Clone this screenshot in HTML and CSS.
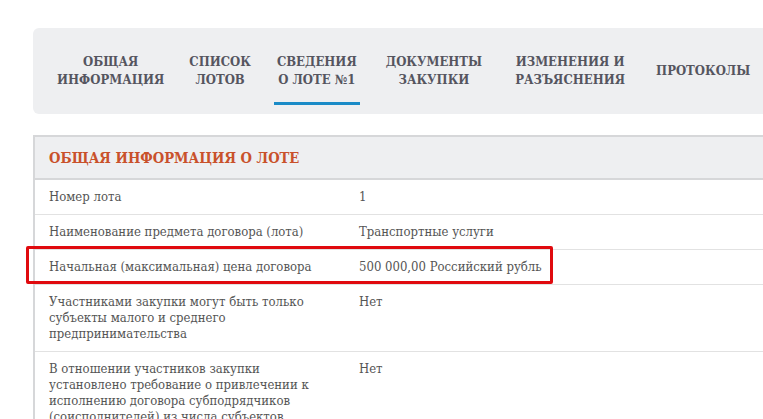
FILE: index.html
```
<!DOCTYPE html>
<html lang="ru">
<head>
<meta charset="utf-8">
<title>Сведения о лоте</title>
<link rel="stylesheet" href="styles.css">
</head>
<body>
<div class="page">
  <nav class="tabs">
    <a class="tab">ОБЩАЯ<br>ИНФОРМАЦИЯ</a>
    <a class="tab">СПИСОК<br>ЛОТОВ</a>
    <a class="tab active">СВЕДЕНИЯ<br>О ЛОТЕ №1</a>
    <a class="tab">ДОКУМЕНТЫ<br>ЗАКУПКИ</a>
    <a class="tab">ИЗМЕНЕНИЯ И<br>РАЗЪЯСНЕНИЯ</a>
    <a class="tab">ПРОТОКОЛЫ</a>
  </nav>
  <section class="panel">
    <h2 class="panel-title">ОБЩАЯ ИНФОРМАЦИЯ О ЛОТЕ</h2>
    <div class="row">
      <div class="label">Номер лота</div>
      <div class="value">1</div>
    </div>
    <div class="row">
      <div class="label">Наименование предмета договора (лота)</div>
      <div class="value">Транспортные услуги</div>
    </div>
    <div class="row highlighted">
      <div class="label">Начальная (максимальная) цена договора</div>
      <div class="value">500 000,00 Российский рубль</div>
      <span class="mark"></span>
    </div>
    <div class="row">
      <div class="label">Участниками закупки могут быть только субъекты малого и среднего предпринимательства</div>
      <div class="value">Нет</div>
    </div>
    <div class="row">
      <div class="label">В отношении участников закупки установлено требование о привлечении к исполнению договора субподрядчиков (соисполнителей) из числа субъектов малого и среднего предпринимательства</div>
      <div class="value">Нет</div>
    </div>
  </section>
</div>
</body>
</html>
```
FILE: styles.css
```
html, body {
  margin: 0;
  padding: 0;
  background: #ffffff;
  overflow: hidden;
}
body {
  font-family: "DejaVu Serif Condensed", "DejaVu Serif", serif;
  color: #555555;
}
.page {
  width: 800px;
  padding: 28px 0 0 33px;
}
.tabs {
  display: flex;
  align-items: stretch;
  height: 86px;
  background: #eeeff1;
  border-radius: 6px 0 0 6px;
  padding-left: 21px;
}
.tab {
  position: relative;
  display: flex;
  align-items: center;
  padding: 0 3px;
  text-align: center;
  font-size: 13px;
  line-height: 18px;
  font-weight: 700;
  color: #55555f;
  white-space: nowrap;
}
.tab:nth-child(2) { margin-left: 19px; }
.tab:nth-child(3) { margin-left: 20px; }
.tab:nth-child(4) { margin-left: 23px; }
.tab:nth-child(5) { margin-left: 27px; }
.tab:nth-child(6) { margin-left: 25px; }
.tab.active::after {
  content: "";
  position: absolute;
  left: 0;
  right: 0;
  bottom: 9px;
  height: 3px;
  background: #1a8bc7;
}
.panel {
  margin-top: 21px;
  border-top: 2px solid #d6d7d9;
  border-left: 2px solid #d6d7d9;
}
.panel-title {
  margin: 0;
  box-sizing: border-box;
  padding: 0 14px;
  display: flex;
  align-items: center;
  background: #eeeff1;
  border-bottom: 2px solid #d6d7d9;
  font-size: 14.6px;
  font-weight: 700;
  color: #c9512b;
  height: 43px;
}
.row {
  position: relative;
  display: grid;
  grid-template-columns: 310px 1fr;
  padding: 9px 14px;
  border-bottom: 1px solid #e2e2e2;
  font-size: 13px;
  line-height: 16px;
}
.label {
  padding-right: 30px;
}
.mark {
  position: absolute;
  left: -9px;
  top: -4px;
  width: 527px;
  height: 38px;
  box-sizing: border-box;
  border: 3px solid #e00a0e;
  border-radius: 2px;
}
```
